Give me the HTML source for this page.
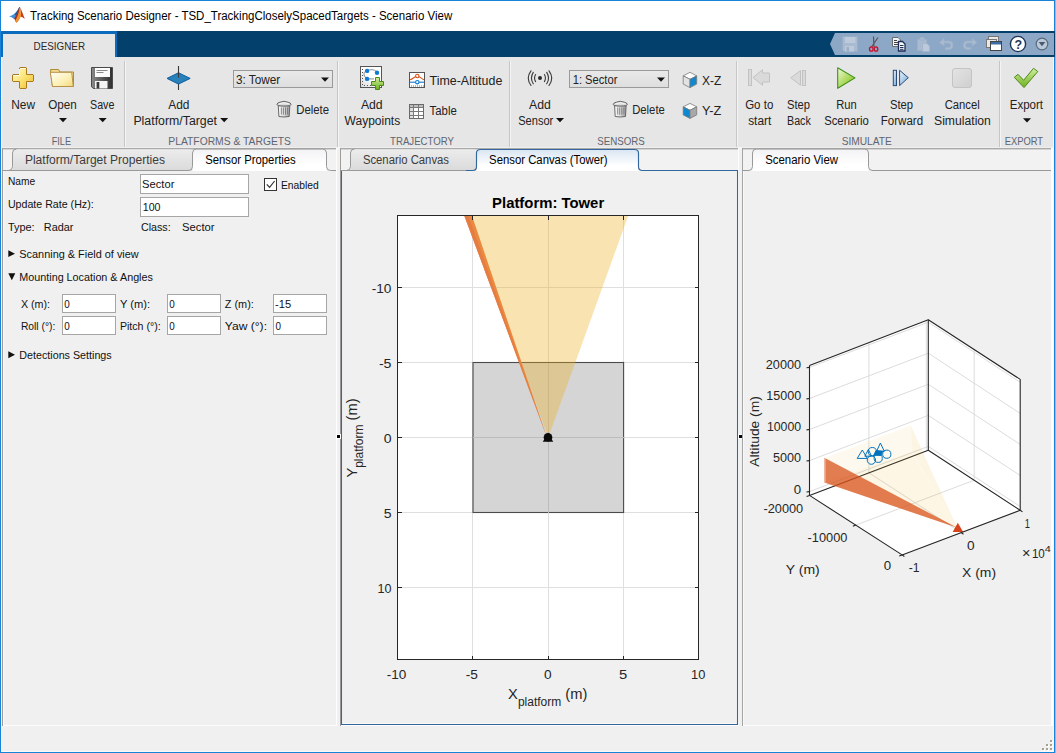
<!DOCTYPE html>
<html>
<head>
<meta charset="utf-8">
<title>Tracking Scenario Designer - TSD_TrackingCloselySpacedTargets - Scenario View</title>
<style>
html,body{margin:0;padding:0;}
body{width:1056px;height:753px;position:relative;overflow:hidden;background:#f0f0f0;font-family:"Liberation Sans",sans-serif;font-size:12px;color:#222;}
.abs{position:absolute;}
#ui{position:absolute;left:0;top:0;width:1056px;height:753px;font-family:"Liberation Sans",sans-serif;}
#ui text{white-space:pre;}
</style>
</head>
<body>
<div class="abs" id="titlebar" style="left:0;top:0;width:1056px;height:31px;background:#fff;"></div>
<div class="abs" id="tabstrip" style="left:0;top:31px;width:1056px;height:26px;background:#04406c;"></div>
<div class="abs" id="toolstrip" style="left:0;top:57px;width:1056px;height:91px;background:#e6e6e6;"></div>
<div class="abs" id="docarea" style="left:0;top:148px;width:1056px;height:605px;background:#f0f0f0;"></div>
<svg id="ui" width="1056" height="753" viewBox="0 0 1056 753">
<defs>
<linearGradient id="gInact" x1="0" y1="0" x2="0" y2="1"><stop offset="0" stop-color="#ececec"/><stop offset="1" stop-color="#dadada"/></linearGradient>
<linearGradient id="gAct" x1="0" y1="0" x2="0" y2="1"><stop offset="0" stop-color="#f3f3f6"/><stop offset="0.7" stop-color="#ffffff"/><stop offset="1" stop-color="#ffffff"/></linearGradient>
<linearGradient id="gActBlue" x1="0" y1="0" x2="0" y2="1"><stop offset="0" stop-color="#d9e5f2"/><stop offset="0.75" stop-color="#ffffff"/><stop offset="1" stop-color="#ffffff"/></linearGradient>
<linearGradient id="gCombo" x1="0" y1="0" x2="0" y2="1"><stop offset="0" stop-color="#e9e9e9"/><stop offset="1" stop-color="#dedede"/></linearGradient>
</defs>
<g id="chrome" shape-rendering="crispEdges">
<!-- DESIGNER tab -->
<rect x="1" y="31" width="116" height="26" fill="#0b6cbd"/>
<rect x="3" y="34" width="112" height="23" fill="#e6e6e6"/>
<!-- quick access toolbar -->
<path d="M830 44 L835 33 H1054 V55 H835 Z" fill="#8da8c6" shape-rendering="auto"/>
<!-- toolstrip bottom edge -->
<rect x="1" y="147" width="1054" height="1" fill="#efefef"/>
<!-- section separators -->
<g fill="#c6c6c6">
<rect x="124" y="61" width="1" height="86"/><rect x="337" y="61" width="1" height="86"/><rect x="509" y="61" width="1" height="86"/><rect x="736" y="61" width="1" height="86"/><rect x="999" y="61" width="1" height="86"/>
</g>
<g fill="#f4f4f4">
<rect x="125" y="61" width="1" height="86"/><rect x="338" y="61" width="1" height="86"/><rect x="510" y="61" width="1" height="86"/><rect x="737" y="61" width="1" height="86"/><rect x="1000" y="61" width="1" height="86"/>
</g>
<!-- combo boxes -->
<rect x="233.5" y="70.5" width="99" height="17" fill="url(#gCombo)" stroke="#9a9a9a"/>
<rect x="569.5" y="70.5" width="99" height="17" fill="url(#gCombo)" stroke="#9a9a9a"/>
</g>
<g id="arrows" fill="#111">
<path d="M59 118 h8 l-4 4.3z"/><path d="M98.7 118 h8 l-4 4.3z"/>
<path d="M220.2 118 h8 l-4 4.3z"/><path d="M556 118 h8 l-4 4.3z"/>
<path d="M1023 118.3 h8 l-4 4.3z"/>
<path d="M321 77.5 h8 l-4 4.3z"/><path d="M657 77.5 h8 l-4 4.3z"/>
</g>
<g id="panels">
<rect x="336" y="148" width="1" height="578" fill="#fdfdfd"/>
<rect x="738" y="148" width="1" height="578" fill="#fdfdfd"/>
<rect x="337" y="147" width="3" height="3" fill="#f4f4f4"/>
<rect x="739" y="147" width="3" height="3" fill="#f4f4f4"/>
<rect x="1" y="147" width="1" height="578" fill="#f6f6f6"/>

<rect x="3" y="150" width="333" height="20" fill="#f2f2f2"/>
<rect x="341" y="150" width="397" height="20" fill="#f2f2f2"/>
<rect x="743" y="150" width="310" height="20" fill="#f2f2f2"/>
<rect x="2" y="148" width="334" height="1" fill="#a9a9a9" shape-rendering="crispEdges"/>
<rect x="2" y="149" width="334" height="1" fill="#d4d4d4" shape-rendering="crispEdges"/>
<rect x="340" y="148" width="398" height="1" fill="#a9a9a9" shape-rendering="crispEdges"/>
<rect x="340" y="149" width="398" height="1" fill="#d4d4d4" shape-rendering="crispEdges"/>
<rect x="742" y="148" width="309" height="1" fill="#a9a9a9" shape-rendering="crispEdges"/>
<rect x="742" y="149" width="309" height="1" fill="#d4d4d4" shape-rendering="crispEdges"/>
<rect x="2" y="148" width="1" height="578" fill="#9c9c9c" shape-rendering="crispEdges"/>
<rect x="3" y="725" width="334" height="1" fill="#fdfdfd"/>
<rect x="3" y="171" width="1" height="554" fill="#f8f8f8"/>
<path d="M12.5 171 V153 Q12.5 149.5 16.0 149.5 H189.0 Q192.5 149.5 192.5 153 V171 Z" fill="url(#gInact)"/>
<path d="M2.5 170.5 H8.500 Q12.500 170.500 12.500 166.500 V153 Q12.500 149 16.500 149" fill="none" stroke="#999"/>
<path d="M2.5 170.500 H189" fill="none" stroke="#999"/>
<path d="M192.5 171 V153 Q192.5 149.5 196.0 149.5 H323.0 Q326.5 149.5 326.5 153 V171 Z" fill="url(#gAct)"/>
<path d="M188.5 170.5 Q192.5 170.5 192.5 166.5 V153 Q192.5 149 196.5 149 H322.5 Q326.5 149 326.5 153 V166.5 Q326.5 170.5 330.5 170.5 H336" fill="none" stroke="#999"/>
<rect x="340" y="148" width="1" height="578" fill="#a29c98" shape-rendering="crispEdges"/>
<rect x="341" y="725" width="397" height="1" fill="#fdfdfd"/>
<path d="M342.500 171 V723.500 H736.500 V171" fill="none" stroke="#fbf8f5"/>
<path d="M350.5 171 V153 Q350.5 149.5 354.0 149.5 H473.0 Q476.5 149.5 476.5 153 V171 Z" fill="url(#gInact)"/>
<path d="M340.500 170.500 H346.500 Q350.500 170.500 350.500 166.500 V153 Q350.500 149 354.500 149" fill="none" stroke="#999"/>
<path d="M340.500 170.500 H468" fill="none" stroke="#999"/>
<path d="M476.5 171 V153 Q476.5 149.5 480.0 149.5 H635.0 Q638.5 149.5 638.5 153 V171 Z" fill="url(#gActBlue)"/>
<path d="M466 170.500 H472.500 Q476.500 170.500 476.500 166.500 V153 Q476.500 149.500 480.500 149.500 H634.500 Q638.500 149.500 638.500 153 V166.500 Q638.500 170.500 642.500 170.500 H737.500 V724.500 H341.500 V171" fill="none" stroke="#33689f" stroke-width="1.150"/>
<rect x="742" y="148" width="1" height="578" fill="#a4a4a4" shape-rendering="crispEdges"/>
<rect x="743" y="171" width="1" height="554" fill="#f9f9f9"/>
<path d="M742.500 170.500 H749 M872 170.500 H1051" fill="none" stroke="#999"/>
<path d="M752.5 171 V153 Q752.5 149.5 756.0 149.5 H865.0 Q868.5 149.5 868.5 153 V171 Z" fill="url(#gAct)"/>
<path d="M748.5 170.5 Q752.5 170.5 752.5 166.5 V153 Q752.5 149 756.5 149 H864.5 Q868.5 149 868.5 153 V166.5 Q868.5 170.5 872.5 170.5 H1051" fill="none" stroke="#999"/>
<rect x="1051" y="148" width="2" height="578" fill="#fdfdfd"/>
<rect x="743" y="725" width="310" height="1" fill="#fdfdfd"/>
<rect x="336" y="434" width="5" height="5" fill="#fff" shape-rendering="crispEdges"/>
<rect x="738" y="434" width="4" height="5" fill="#fff" shape-rendering="crispEdges"/>
<rect x="337" y="435" width="3" height="3" fill="#000" shape-rendering="crispEdges"/>
<rect x="739" y="435" width="3" height="3" fill="#000" shape-rendering="crispEdges"/>
</g>
<g id="winborder" shape-rendering="crispEdges">
<rect x="1" y="57" width="1" height="695" fill="#f7f7f7"/>
<rect x="1053" y="57" width="1" height="695" fill="#f9f6f4"/>
<rect x="1" y="751" width="1053" height="1" fill="#f9f9f9"/>
<g fill="#1883d7"><rect x="0" y="0" width="1055" height="1"/><rect x="0" y="752" width="1055" height="1"/><rect x="0" y="0" width="1" height="753"/><rect x="1054" y="0" width="1" height="753"/></g>
<rect x="1054" y="31" width="1" height="26" fill="#04406c"/>
<rect x="1055" y="0" width="1" height="753" fill="#b8b0aa"/>
<g fill="#fff"><rect x="1051" y="741" width="2" height="2"/><rect x="1047" y="745" width="2" height="2"/><rect x="1051" y="745" width="2" height="2"/><rect x="1043" y="749" width="2" height="2"/><rect x="1047" y="749" width="2" height="2"/><rect x="1051" y="749" width="2" height="2"/></g>
<g fill="#a8a28e"><rect x="1050" y="740" width="2" height="2"/><rect x="1046" y="744" width="2" height="2"/><rect x="1050" y="744" width="2" height="2"/><rect x="1042" y="748" width="2" height="2"/><rect x="1046" y="748" width="2" height="2"/><rect x="1050" y="748" width="2" height="2"/></g>
</g>
<g id="toolstrip-text">
<text x="11.2" y="109.0" font-size="12" fill="#222" textLength="23.8" lengthAdjust="spacingAndGlyphs">New</text>
<text x="48.2" y="109.0" font-size="12" fill="#222" textLength="28.5" lengthAdjust="spacingAndGlyphs">Open</text>
<text x="90.0" y="109.0" font-size="12" fill="#222" textLength="24.4" lengthAdjust="spacingAndGlyphs">Save</text>
<text x="168.3" y="109.0" font-size="12" fill="#222" textLength="21.2" lengthAdjust="spacingAndGlyphs">Add</text>
<text x="133.4" y="124.9" font-size="12" fill="#222" textLength="83.6" lengthAdjust="spacingAndGlyphs">Platform/Target</text>
<text x="235.9" y="84.0" font-size="12" fill="#222" textLength="44.3" lengthAdjust="spacingAndGlyphs">3: Tower</text>
<text x="296.2" y="114.0" font-size="12" fill="#222" textLength="32.8" lengthAdjust="spacingAndGlyphs">Delete</text>
<text x="360.9" y="109.0" font-size="12" fill="#222" textLength="21.8" lengthAdjust="spacingAndGlyphs">Add</text>
<text x="344.6" y="124.9" font-size="12" fill="#222" textLength="55.6" lengthAdjust="spacingAndGlyphs">Waypoints</text>
<text x="429.6" y="85.0" font-size="12" fill="#222" textLength="72.7" lengthAdjust="spacingAndGlyphs">Time-Altitude</text>
<text x="429.6" y="115.3" font-size="12" fill="#222" textLength="27.2" lengthAdjust="spacingAndGlyphs">Table</text>
<text x="529.0" y="109.0" font-size="12" fill="#222" textLength="21.8" lengthAdjust="spacingAndGlyphs">Add</text>
<text x="518.2" y="124.9" font-size="12" fill="#222" textLength="35.1" lengthAdjust="spacingAndGlyphs">Sensor</text>
<text x="572.7" y="84.0" font-size="12" fill="#222" textLength="44.7" lengthAdjust="spacingAndGlyphs">1: Sector</text>
<text x="632.2" y="114.0" font-size="12" fill="#222" textLength="32.6" lengthAdjust="spacingAndGlyphs">Delete</text>
<text x="702.0" y="85.0" font-size="12" fill="#222" textLength="19.3" lengthAdjust="spacingAndGlyphs">X-Z</text>
<text x="702.0" y="115.3" font-size="12" fill="#222" textLength="19.3" lengthAdjust="spacingAndGlyphs">Y-Z</text>
<text x="745.2" y="109.0" font-size="12" fill="#222" textLength="28.1" lengthAdjust="spacingAndGlyphs">Go to</text>
<text x="748.2" y="124.9" font-size="12" fill="#222" textLength="23.0" lengthAdjust="spacingAndGlyphs">start</text>
<text x="787.0" y="109.0" font-size="12" fill="#222" textLength="23.1" lengthAdjust="spacingAndGlyphs">Step</text>
<text x="787.0" y="124.9" font-size="12" fill="#222" textLength="23.8" lengthAdjust="spacingAndGlyphs">Back</text>
<text x="836.2" y="109.0" font-size="12" fill="#222" textLength="20.5" lengthAdjust="spacingAndGlyphs">Run</text>
<text x="824.2" y="124.9" font-size="12" fill="#222" textLength="44.6" lengthAdjust="spacingAndGlyphs">Scenario</text>
<text x="890.0" y="109.0" font-size="12" fill="#222" textLength="23.1" lengthAdjust="spacingAndGlyphs">Step</text>
<text x="880.8" y="124.9" font-size="12" fill="#222" textLength="42.3" lengthAdjust="spacingAndGlyphs">Forward</text>
<text x="944.7" y="109.0" font-size="12" fill="#222" textLength="35.1" lengthAdjust="spacingAndGlyphs">Cancel</text>
<text x="934.0" y="124.9" font-size="12" fill="#222" textLength="56.9" lengthAdjust="spacingAndGlyphs">Simulation</text>
<text x="1009.7" y="108.7" font-size="12" fill="#222" textLength="33.4" lengthAdjust="spacingAndGlyphs">Export</text>
</g>
<g id="section-labels">
<text x="51.7" y="144.7" font-size="11.2" fill="#5e6470" textLength="19.4" lengthAdjust="spacingAndGlyphs">FILE</text>
<text x="168.3" y="144.7" font-size="11.2" fill="#5e6470" textLength="122.7" lengthAdjust="spacingAndGlyphs">PLATFORMS &amp; TARGETS</text>
<text x="390.1" y="144.7" font-size="11.2" fill="#5e6470" textLength="63.9" lengthAdjust="spacingAndGlyphs">TRAJECTORY</text>
<text x="597.2" y="144.7" font-size="11.2" fill="#5e6470" textLength="47.6" lengthAdjust="spacingAndGlyphs">SENSORS</text>
<text x="841.7" y="144.7" font-size="11.2" fill="#5e6470" textLength="50.1" lengthAdjust="spacingAndGlyphs">SIMULATE</text>
<text x="1004.7" y="144.7" font-size="11.2" fill="#5e6470" textLength="38.4" lengthAdjust="spacingAndGlyphs">EXPORT</text>
</g>
<g id="doc-tab-text">
<text x="24.9" y="164.0" font-size="12.5" fill="#3c3c3c" textLength="140.1" lengthAdjust="spacingAndGlyphs">Platform/Target Properties</text>
<text x="205.2" y="164.0" font-size="12.5" fill="#000" textLength="90.6" lengthAdjust="spacingAndGlyphs">Sensor Properties</text>
<text x="362.9" y="164.0" font-size="12.5" fill="#3c3c3c" textLength="86.1" lengthAdjust="spacingAndGlyphs">Scenario Canvas</text>
<text x="489.1" y="164.0" font-size="12.5" fill="#000" textLength="118.4" lengthAdjust="spacingAndGlyphs">Sensor Canvas (Tower)</text>
<text x="765.2" y="164.0" font-size="12.5" fill="#000" textLength="72.8" lengthAdjust="spacingAndGlyphs">Scenario View</text>
</g>
<text x="30.1" y="20.0" font-size="12" fill="#000" textLength="422.1" lengthAdjust="spacingAndGlyphs">Tracking Scenario Designer - TSD_TrackingCloselySpacedTargets - Scenario View</text>
<text x="33.5" y="49.9" font-size="11.2" fill="#2a2a2a" textLength="51.6" lengthAdjust="spacingAndGlyphs">DESIGNER</text>
<defs>
<linearGradient id="gGold" x1="0" y1="0" x2="1" y2="1"><stop offset="0" stop-color="#fffbd6"/><stop offset="0.5" stop-color="#fbe476"/><stop offset="1" stop-color="#f0b92c"/></linearGradient>
<linearGradient id="gFolder" x1="0" y1="0" x2="1" y2="1"><stop offset="0" stop-color="#fffef4"/><stop offset="0.6" stop-color="#fbf0b4"/><stop offset="1" stop-color="#f1d776"/></linearGradient>
<linearGradient id="gDisk" x1="0" y1="0" x2="1" y2="0"><stop offset="0" stop-color="#8a8a8a"/><stop offset="0.5" stop-color="#5a5a5a"/><stop offset="1" stop-color="#2e2e2e"/></linearGradient>
<linearGradient id="gGreen" x1="0" y1="0" x2="0" y2="1"><stop offset="0" stop-color="#d3ee9f"/><stop offset="1" stop-color="#6cb11f"/></linearGradient>
<linearGradient id="gRun" x1="0" y1="0" x2="1" y2="1"><stop offset="0" stop-color="#f0f9d8"/><stop offset="0.6" stop-color="#a5d64f"/><stop offset="1" stop-color="#6fb01e"/></linearGradient>
<linearGradient id="gStepF" x1="0" y1="0" x2="1" y2="1"><stop offset="0" stop-color="#eef5fc"/><stop offset="1" stop-color="#6fa6dc"/></linearGradient>
<linearGradient id="gGray" x1="0" y1="0" x2="1" y2="1"><stop offset="0" stop-color="#e4e4e4"/><stop offset="1" stop-color="#cfcfcf"/></linearGradient>
<linearGradient id="gTrash" x1="0" y1="0" x2="1" y2="0"><stop offset="0" stop-color="#fdfdfd"/><stop offset="0.5" stop-color="#d9d9d9"/><stop offset="1" stop-color="#9c9c9c"/></linearGradient>
<linearGradient id="gAxes" x1="0" y1="1" x2="1" y2="0"><stop offset="0" stop-color="#d8d8d8"/><stop offset="0.5" stop-color="#ffffff"/><stop offset="1" stop-color="#ffffff"/></linearGradient>
</defs>
<g id="icons">
<!-- New (gold plus) -->
<path d="M20 67.500 h6 l0.500 0.500 v6.500 h6.500 l0.500 0.500 v6 l-0.500 0.500 h-6.500 v6.500 l-0.500 0.500 h-6 l-0.500 -0.500 v-6.500 h-6.500 l-0.500 -0.500 v-6 l0.500 -0.500 h6.500 v-6.500 z" fill="url(#gGold)" stroke="#a87a1c" stroke-width="1"/>
<path d="M20.500 68.500 h5 M13.500 75.500 h6 v-6.500" fill="none" stroke="#fffef0" stroke-width="1" stroke-opacity="0.9"/>
<!-- Open (folder) -->
<path d="M50.500 69.500 h8 l1.500 2.500 h13.500 v14.500 h-21 z" fill="#f3dc8d" stroke="#b08a3c" stroke-width="1"/>
<path d="M50.300 72.300 h21.400 l1.600 14.200 h-20.800 z" fill="url(#gFolder)" stroke="#b8924a" stroke-width="1"/>
<!-- Save (floppy) -->
<path d="M91.500 67.500 h21 v21 h-19.200 l-1.800 -1.800 z" fill="url(#gDisk)" stroke="#4a4a4a" stroke-width="1"/>
<rect x="95" y="68" width="15" height="9" fill="#fdfdfd"/>
<path d="M96.500 70.500 h11 M96.500 72.500 h7" stroke="#8a8a8a" stroke-width="1"/>
<rect x="95" y="81" width="12.500" height="7.500" fill="#f4f4f4"/>
<rect x="96.600" y="82" width="2.700" height="6.500" fill="#3a3a3a"/>
<!-- Add Platform/Target (diamond) -->
<path d="M178.500 66 V90" stroke="#3a3a3a" stroke-width="1.100"/>
<path d="M167 78.400 L178.500 72.800 L190.200 78.400 L178.500 84.100 Z" fill="#2a80b9" stroke="#0c5c9e" stroke-width="1"/>
<path d="M178.500 72 V77.700" stroke="#3a3a3a" stroke-width="1.100"/>
<!-- trash icons -->
<g transform="translate(276 96.5)">
<path d="M2.300 9.200 L2.900 20 Q8 21 13.200 20 L13.800 9.200 Z" fill="url(#gTrash)" stroke="#5a5a5a" stroke-width="0.900"/>
<path d="M1 8 Q1 6.300 4 5.700 Q8 3.900 12 5.700 Q15 6.300 15 8 Q15 9.500 8 9.500 Q1 9.500 1 8 Z" fill="#dcdcdc" stroke="#555" stroke-width="0.900"/>
<path d="M3 7.300 Q8 5.300 13 7.300" fill="none" stroke="#f6f6f6" stroke-width="0.900"/>
<path d="M5.400 11 V18 M7.400 11 V18.200 M9.500 11 V18.200 M11.600 11 V18" stroke="#6a6a6a" stroke-width="0.750" fill="none"/>
</g>
<g transform="translate(612.3 96.5)">
<path d="M2.300 9.200 L2.900 20 Q8 21 13.200 20 L13.800 9.200 Z" fill="url(#gTrash)" stroke="#5a5a5a" stroke-width="0.900"/>
<path d="M1 8 Q1 6.300 4 5.700 Q8 3.900 12 5.700 Q15 6.300 15 8 Q15 9.500 8 9.500 Q1 9.500 1 8 Z" fill="#dcdcdc" stroke="#555" stroke-width="0.900"/>
<path d="M3 7.300 Q8 5.300 13 7.300" fill="none" stroke="#f6f6f6" stroke-width="0.900"/>
<path d="M5.400 11 V18 M7.400 11 V18.200 M9.500 11 V18.200 M11.600 11 V18" stroke="#6a6a6a" stroke-width="0.750" fill="none"/>
</g>
<!-- Add waypoints -->
<rect x="360.500" y="66.500" width="21" height="21" fill="url(#gAxes)" stroke="#555"/>
<path d="M362 69.500 h1 M362 72.500 h1 M362 75.500 h1 M362 78.500 h1 M362 81.500 h1 M362 84.500 h1 M364.500 86 v-1 M367.500 86 v-1 M370.500 86 v-1 M373.500 86 v-1 M376.500 86 v-1 M379.500 86 v-1" stroke="#555" stroke-width="1"/>
<path d="M367.100 78.900 C362.500 76 363.500 70.500 367.100 70.900 C371 68.500 376 70 377 72.700 M367.100 78.900 H374" fill="none" stroke="#8a8a8a" stroke-width="1"/>
<circle cx="367.100" cy="70.900" r="2.200" fill="#0f7ad5"/><circle cx="377" cy="72.700" r="2.200" fill="#0f7ad5"/><circle cx="367.100" cy="78.900" r="2.200" fill="#0f7ad5"/>
<path d="M375.500 77.500 h4 v4 h4 v4 h-4 v4 h-4 v-4 h-4 v-4 h4 z" fill="url(#gGreen)" stroke="#4e8a17" stroke-width="1"/>
<!-- Time-Altitude -->
<rect x="409.500" y="72.500" width="15" height="15" fill="#fff" stroke="#555"/>
<path d="M411 86 h1 M413 86 h1 M415 86 h1 M417 86 h1 M419 86 h1 M421 86 h1 M423 86 h1" stroke="#777" stroke-width="1"/>
<path d="M410 79.800 C413 79 415 76 417.300 76 C419.600 76 421.500 79 424 79.800" fill="none" stroke="#d9531a" stroke-width="1.100"/>
<path d="M410 82.200 H424" stroke="#0f7ad5" stroke-width="1.100"/>
<circle cx="417.300" cy="76" r="1.700" fill="#fff" stroke="#d9531a" stroke-width="1.100"/>
<circle cx="417.300" cy="82.200" r="1.700" fill="#fff" stroke="#0f7ad5" stroke-width="1.100"/>
<!-- Table -->
<g shape-rendering="crispEdges">
<rect x="409.500" y="104.500" width="14" height="14" fill="#fff" stroke="#6a6a6a"/>
<rect x="410" y="105" width="13" height="2" fill="#bdbdbd"/>
<rect x="410" y="108" width="3" height="10" fill="#dedede"/>
<path d="M410 107.500 h13 M410 111.500 h13 M410 115.500 h13 M413.500 105 v13 M418.500 105 v13" stroke="#7a7a7a" stroke-width="1"/>
</g>
<!-- Add sensor -->
<circle cx="540" cy="78" r="2" fill="#2a2a2a"/>
<g fill="none" stroke="#3a3a3a" stroke-width="1.100" stroke-linecap="round">
<path d="M535.600 74.500 Q533.500 78 535.600 81.600"/><path d="M533.300 72.400 Q529.600 78 533.300 83.800"/><path d="M531 70.800 Q525.500 78 531 85.500"/>
<path d="M544.400 74.500 Q546.500 78 544.400 81.600"/><path d="M546.700 72.400 Q550.400 78 546.700 83.800"/><path d="M549 70.800 Q554.500 78 549 85.500"/>
</g>
<!-- cubes -->
<g stroke="#7a7a7a" stroke-width="0.800" stroke-linejoin="round">
<path d="M690 72.300 L696.700 75.900 L690 79.300 L683.200 75.900 Z" fill="#fdfdfd"/>
<path d="M683.200 75.900 L690 79.300 V87.600 L683.200 84.100 Z" fill="#e2e2e2"/>
<path d="M696.700 75.900 L690 79.300 V87.600 L696.700 84.100 Z" fill="#0f88d0"/>
<path d="M690 103.400 L696.700 106.800 L690 110.300 L683.200 106.800 Z" fill="#fdfdfd"/>
<path d="M683.200 106.800 L690 110.300 V118.400 L683.200 114.900 Z" fill="#0f88d0"/>
<path d="M696.700 106.800 L690 110.300 V118.400 L696.700 114.900 Z" fill="#a8a8a8"/>
</g>
<!-- Go to start (disabled) -->
<g fill="#dadada" stroke="#c2c2c2" stroke-width="1">
<rect x="748.500" y="69.500" width="3" height="16"/>
<path d="M753 77.500 L762.500 69.800 V73 H769.500 V82 H762.500 V85.300 Z"/>
<path d="M790.800 77.700 L800.500 70.500 V85.300 Z"/>
<rect x="802.500" y="70.500" width="3" height="15"/>
</g>
<!-- Run -->
<path d="M837.700 67.800 L855 77.900 L837.700 88.300 Z" fill="url(#gRun)" stroke="#3e8e1e" stroke-width="1.100" stroke-linejoin="round"/>
<!-- Step forward -->
<rect x="893.300" y="70.300" width="3.200" height="15.300" fill="url(#gStepF)" stroke="#2a4a7a" stroke-width="1"/>
<path d="M899.600 70.300 L908.300 77.700 L899.600 85.600 Z" fill="url(#gStepF)" stroke="#2a4a7a" stroke-width="1" stroke-linejoin="round"/>
<!-- Cancel -->
<rect x="952.500" y="68.500" width="19" height="19" rx="2.500" fill="url(#gGray)" stroke="#c4c4c4"/>
<!-- Export check -->
<path d="M1014.300 77.300 L1018 74.300 L1023.600 80.300 L1033.500 68.300 L1037.800 71.500 L1024 87.600 Z" fill="url(#gGreen)" stroke="#4e8a17" stroke-width="1" stroke-linejoin="round"/>
<!-- Matlab logo -->
<path d="M9 16.300 C12.500 15.600 16.500 13.500 19.300 7 L19 13 L15.300 18.800 L14 19 C12.500 17.600 10.800 17 9 16.300 Z" fill="#3b8ed8"/>
<path d="M14.500 14.300 C16.500 12.500 18 10 19.300 7 L18.800 12.500 L16 15.500 Z" fill="#1f5a9e"/>
<path d="M19.300 6.900 C18 11.500 16.500 15.500 14.200 18.600 L16.300 22.800 C18.500 21 19.500 18.500 20.500 16.500 L20 6.900 Z" fill="#a92a1a"/>
<path d="M19.700 6.800 C20.800 9.500 21.200 14 20.800 16.600 C19.500 19 18.200 21.200 16.300 22.800 L15.300 20.600 C17.600 17 19.200 12 19.700 6.800 Z" fill="#f0922b"/>
<path d="M19.800 6.800 C21.600 10 23.200 15 24.800 18.700 C23.600 17.900 22.200 17 20.900 16.700 C21.300 13 20.900 9.500 19.800 6.800 Z" fill="#c43d20"/>
</g>
<g id="qat">
<!-- save (disabled) -->
<path d="M842.500 36.500 h15 v15 h-13.500 l-1.500 -1.500 z" fill="#a9bbd0" stroke="#9aaec6"/>
<rect x="845" y="37" width="10.500" height="6" fill="#bccadb"/>
<rect x="845" y="46" width="9" height="5.500" fill="#bccadb"/>
<rect x="846.500" y="47" width="2.500" height="4.500" fill="#9aaec6"/>
<!-- scissors -->
<path d="M873.500 36.500 L874 47 M878 37.500 L871.500 47" stroke="#555" stroke-width="1.200" fill="none"/>
<ellipse cx="871.300" cy="49" rx="1.800" ry="2.200" fill="none" stroke="#c8102e" stroke-width="1.300"/>
<ellipse cx="876" cy="49" rx="1.800" ry="2.200" fill="none" stroke="#c8102e" stroke-width="1.300"/>
<!-- copy -->
<path d="M892.500 37.500 h5.500 l2.500 2.500 v6.500 h-8 z" fill="#f4f4f4" stroke="#555" stroke-width="0.800"/>
<path d="M894 40.500 h3 M894 42.500 h5 M894 44.500 h5" stroke="#444" stroke-width="1"/>
<path d="M898.500 41.500 h4 l2.500 2.500 v7 h-6.500 z" fill="#f8f8f8" stroke="#1d2f55" stroke-width="1.300"/>
<path d="M900 45.500 h3.500 M900 47.500 h3.500 M900 49.300 h3.500" stroke="#1d2f55" stroke-width="1"/>
<!-- paste (disabled) -->
<path d="M917.500 39.500 h9 v11 h-9 z" fill="#a9bbd0" stroke="#9fb2c9"/>
<rect x="920" y="37.500" width="4" height="2.500" fill="#a9bbd0" stroke="#9fb2c9"/>
<path d="M922.500 43.500 h4.500 l2.500 2.500 v5.500 h-7 z" fill="#bccadb" stroke="#a3b6cc"/>
<!-- undo / redo (disabled) -->
<path d="M939.500 42.500 l4.500 -4 v2.500 h5 q4 0 4 4 q0 4.500 -4.500 4.500 h-3 v-2 h3 q2.300 0 2.300 -2.500 q0 -2 -2.300 -2 h-4.500 v3 z" fill="#a9bbd0" stroke="#9db0c8" stroke-width="0.800"/>
<path d="M976.800 42.500 l-4.500 -4 v2.500 h-5 q-4 0 -4 4 q0 4.500 4.500 4.500 h3 v-2 h-3 q-2.300 0 -2.300 -2.500 q0 -2 2.300 -2 h4.500 v3 z" fill="#a9bbd0" stroke="#9db0c8" stroke-width="0.800"/>
<!-- windows -->
<rect x="988.500" y="36.500" width="10" height="8" fill="#e8e8e8" stroke="#777"/>
<rect x="986.500" y="39.500" width="10" height="8" fill="#e8e8e8" stroke="#777"/>
<rect x="990.500" y="41.500" width="11" height="9" fill="#fff" stroke="#444"/>
<rect x="991" y="42" width="10" height="2.500" fill="#3a6ea5"/>
<!-- help -->
<circle cx="1018" cy="44" r="7.600" fill="#fff" stroke="#1d3557" stroke-width="1.400"/>
<text x="1014.600" y="48.600" font-size="12.500" font-weight="bold" fill="#1d3557">?</text>
<!-- dropdown -->
<circle cx="1042" cy="44" r="5.800" fill="#b9c9db" stroke="#5a6a7c" stroke-width="1.200"/>
<path d="M1038.700 42 h6.600 l-3.300 4.200 z" fill="#4a5868"/>
</g>
<g id="props">
<g shape-rendering="crispEdges" fill="#fff" stroke="#a6a6a6">
<rect x="140.5" y="174.5" width="108" height="19"/>
<rect x="140.5" y="197.5" width="108" height="19"/>
<rect x="62.5" y="294.5" width="53" height="18"/>
<rect x="167.5" y="294.5" width="53" height="18"/>
<rect x="273.5" y="294.5" width="53" height="18"/>
<rect x="62.5" y="316.5" width="53" height="18"/>
<rect x="167.5" y="316.5" width="53" height="18"/>
<rect x="273.5" y="316.5" width="53" height="18"/>
</g>
<rect x="264.5" y="178.5" width="12" height="12" fill="#fff" stroke="#333" shape-rendering="crispEdges"/>
<path d="M266.8 184.3 L269.6 187.4 L274.6 181" fill="none" stroke="#333" stroke-width="1.2"/>
<path d="M8.3 250.3 L15 253.7 L8.3 257 Z" fill="#111"/>
<path d="M8.3 273.3 H15.3 L11.8 280.3 Z" fill="#111"/>
<path d="M8.3 351.3 L15 354.8 L8.3 358.3 Z" fill="#111"/>
<text x="7.9" y="184.7" font-size="11" fill="#111" textLength="27.2" lengthAdjust="spacingAndGlyphs">Name</text>
<text x="142.1" y="187.5" font-size="11" fill="#111" textLength="32.3" lengthAdjust="spacingAndGlyphs">Sector</text>
<text x="280.9" y="188.7" font-size="11" fill="#111" textLength="37.8" lengthAdjust="spacingAndGlyphs">Enabled</text>
<text x="7.9" y="208.0" font-size="11" fill="#111" textLength="85.8" lengthAdjust="spacingAndGlyphs">Update Rate (Hz):</text>
<text x="142.8" y="211.1" font-size="11" fill="#111" textLength="17.7" lengthAdjust="spacingAndGlyphs">100</text>
<text x="7.9" y="231.1" font-size="11" fill="#111" textLength="26.7" lengthAdjust="spacingAndGlyphs">Type:</text>
<text x="43.8" y="231.1" font-size="11" fill="#111" textLength="29.6" lengthAdjust="spacingAndGlyphs">Radar</text>
<text x="140.9" y="231.1" font-size="11" fill="#111" textLength="29.8" lengthAdjust="spacingAndGlyphs">Class:</text>
<text x="182.1" y="231.1" font-size="11" fill="#111" textLength="32.5" lengthAdjust="spacingAndGlyphs">Sector</text>
<text x="19.3" y="258.0" font-size="11" fill="#111" textLength="119.4" lengthAdjust="spacingAndGlyphs">Scanning &amp; Field of view</text>
<text x="19.3" y="281.0" font-size="11" fill="#111" textLength="133.6" lengthAdjust="spacingAndGlyphs">Mounting Location &amp; Angles</text>
<text x="20.9" y="308.0" font-size="11" fill="#111" textLength="29.2" lengthAdjust="spacingAndGlyphs">X (m):</text>
<text x="119.9" y="308.0" font-size="11" fill="#111" textLength="30.2" lengthAdjust="spacingAndGlyphs">Y (m):</text>
<text x="224.8" y="308.0" font-size="11" fill="#111" textLength="29.0" lengthAdjust="spacingAndGlyphs">Z (m):</text>
<text x="20.9" y="329.7" font-size="11" fill="#111" textLength="34.5" lengthAdjust="spacingAndGlyphs">Roll (°):</text>
<text x="119.9" y="329.7" font-size="11" fill="#111" textLength="40.8" lengthAdjust="spacingAndGlyphs">Pitch (°):</text>
<text x="224.8" y="329.7" font-size="11" fill="#111" textLength="42.2" lengthAdjust="spacingAndGlyphs">Yaw (°):</text>
<text x="64.3" y="308.0" font-size="11" fill="#111" textLength="5.5" lengthAdjust="spacingAndGlyphs">0</text>
<text x="169.3" y="308.0" font-size="11" fill="#111" textLength="5.5" lengthAdjust="spacingAndGlyphs">0</text>
<text x="275.0" y="308.0" font-size="11" fill="#111" textLength="16.1" lengthAdjust="spacingAndGlyphs">-15</text>
<text x="64.3" y="329.7" font-size="11" fill="#111" textLength="5.5" lengthAdjust="spacingAndGlyphs">0</text>
<text x="169.3" y="329.7" font-size="11" fill="#111" textLength="5.5" lengthAdjust="spacingAndGlyphs">0</text>
<text x="275.5" y="329.7" font-size="11" fill="#111" textLength="5.5" lengthAdjust="spacingAndGlyphs">0</text>
<text x="19.3" y="358.7" font-size="11" fill="#111" textLength="92.4" lengthAdjust="spacingAndGlyphs">Detections Settings</text>
</g>
<g id="plot2d">
<rect x="397.5" y="215.5" width="301.0" height="444.0" fill="#fff"/>
<clipPath id="axclip"><rect x="397.5" y="215.5" width="301.0" height="444.0"/></clipPath>
<g stroke="#dfdfdf" stroke-width="1" shape-rendering="crispEdges">
<path d="M472.5 215.5 V659.5"/>
<path d="M548.5 215.5 V659.5"/>
<path d="M623.5 215.5 V659.5"/>
<path d="M397.5 287.5 H698.5"/>
<path d="M397.5 362.5 H698.5"/>
<path d="M397.5 437.5 H698.5"/>
<path d="M397.5 512.5 H698.5"/>
<path d="M397.5 587.5 H698.5"/>
</g>
<rect x="473.0" y="362.5" width="150.6" height="150.0" fill="#bebebe" fill-opacity="0.65" stroke="#4a4a4a" stroke-width="1.1"/>
<path d="M548.5 362.5 V512.5 M473.0 437.5 H623.6" stroke="#bcbcbc" stroke-width="1" shape-rendering="crispEdges"/>
<g clip-path="url(#axclip)">
<path d="M548.3 437.5 L467.7 215.5 L628.3 215.5 Z" fill="#edb120" fill-opacity="0.35"/>
<path d="M547 437.5 L464.2 215.5 L471.9 215.5 Z" fill="#ea8a3e"/>
<path d="M547 437.5 L464.2 215.5 L468.3 215.5 Z" fill="#e57c44"/>
</g>
<circle cx="548.0" cy="437.2" r="4.3" fill="#0a0a0a"/>
<path d="M548.0 432.5 L553.1999999999999 441.7 H542.8 Z" fill="#0a0a0a"/>
<rect x="397.5" y="215.5" width="301.0" height="444.0" fill="none" stroke="#262626" stroke-width="1" shape-rendering="crispEdges"/>
<g stroke="#262626" stroke-width="1" shape-rendering="crispEdges">
<path d="M472.5 659.5 v-4 M472.5 215.5 v4"/>
<path d="M548.5 659.5 v-4 M548.5 215.5 v4"/>
<path d="M623.5 659.5 v-4 M623.5 215.5 v4"/>
<path d="M397.5 287.5 h4 M698.5 287.5 h-4"/>
<path d="M397.5 362.5 h4 M698.5 362.5 h-4"/>
<path d="M397.5 437.5 h4 M698.5 437.5 h-4"/>
<path d="M397.5 512.5 h4 M698.5 512.5 h-4"/>
<path d="M397.5 587.5 h4 M698.5 587.5 h-4"/>
</g>
<text x="371.7" y="293.4" font-size="12.3" fill="#262626" textLength="19.8" lengthAdjust="spacingAndGlyphs">-10</text>
<text x="378.9" y="368.4" font-size="12.3" fill="#262626" textLength="12.6" lengthAdjust="spacingAndGlyphs">-5</text>
<text x="383.7" y="443.4" font-size="12.3" fill="#262626" textLength="7.8" lengthAdjust="spacingAndGlyphs">0</text>
<text x="383.7" y="518.4" font-size="12.3" fill="#262626" textLength="7.8" lengthAdjust="spacingAndGlyphs">5</text>
<text x="377.5" y="593.4" font-size="12.3" fill="#262626" textLength="14.0" lengthAdjust="spacingAndGlyphs">10</text>
<text x="386.8" y="678.6" font-size="12.3" fill="#262626" textLength="19.6" lengthAdjust="spacingAndGlyphs">-10</text>
<text x="465.8" y="678.6" font-size="12.3" fill="#262626" textLength="12.2" lengthAdjust="spacingAndGlyphs">-5</text>
<text x="543.9" y="678.6" font-size="12.3" fill="#262626" textLength="7.6" lengthAdjust="spacingAndGlyphs">0</text>
<text x="618.9" y="678.6" font-size="12.3" fill="#262626" textLength="8.2" lengthAdjust="spacingAndGlyphs">5</text>
<text x="691.1" y="678.6" font-size="12.3" fill="#262626" textLength="14.3" lengthAdjust="spacingAndGlyphs">10</text>
<text x="492.1" y="207.5" font-size="14.67" fill="#000" textLength="112.1" lengthAdjust="spacingAndGlyphs" font-weight="bold">Platform: Tower</text>
<text x="508.1" y="698.8" font-size="14.67" fill="#262626">X<tspan dy="7.3" font-size="12">platform</tspan><tspan dy="-7.3"> (m)</tspan></text>
<text transform="translate(357.2 477.6) rotate(-90)" font-size="14.67" fill="#262626">Y<tspan dy="5.4" font-size="12">platform</tspan><tspan dy="-5.4"> (m)</tspan></text>
</g>
<g id="plot3d">
<path d="M809.5 495.4 L809.5 365.6 L928.3 319.7 L1020.2 379.4 L1020.2 510.3 L902.1 554.9 Z" fill="#fff"/>
<g stroke="#d8d8d8" stroke-width="0.9" fill="none">
<path d="M809.5 460.6 L928.3 415.4 L1020.2 475.5"/>
<path d="M809.5 429.5 L928.3 384.3 L1020.2 444.4"/>
<path d="M809.5 398.5 L928.3 353.2 L1020.2 413.4"/>
<path d="M809.5 367.4 L928.3 322.2 L1020.2 382.3"/>
<path d="M809.5 491.6 L928.3 446.4 L1020.2 506.5"/>
<path d="M868.9 343.0 L868.9 472.8 L961.2 532.6"/>
<path d="M974.2 349.6 L974.2 480.2 L855.8 525.1"/>
<path d="M926.3 321 V449.5"/>
</g>
<g stroke="#262626" stroke-width="1.1" fill="none" stroke-linejoin="round">
<path d="M809.5 495.4 L928.3 450.2 L1020.2 510.3"/>
<path d="M928.3 450.2 L928.3 319.7"/>
</g>
<path d="M824 458.2 L910.8 425.5 L957.3 527.8 Z" fill="#edb120" fill-opacity="0.075"/>
<path d="M910.8 425.5 L912 452 L957.3 527.8 Z" fill="#edb120" fill-opacity="0.05"/>
<path d="M824 482.3 L870 498 L957.3 527.8 L910.8 452 Z" fill="#edb120" fill-opacity="0.04"/>
<path d="M824.3 457.7 L957.3 527.8 L824.3 482.6 Z" fill="#d9531a" fill-opacity="0.76"/>
<rect x="824.3" y="457.7" width="1.6" height="24.9" fill="#fff" fill-opacity="0.3"/>
<g stroke="#0072bd" stroke-width="1" fill="none" stroke-linejoin="round">
<path d="M857.2 458.4 L862.3 450 L867.3 458.4 Z"/>
<path d="M876.6 451.3 L880.4 443 L884.3 451.3 Z"/>
<path d="M864.8 456.2 L868.3 449.6 L871.6 456.2 Z"/>
<path d="M873.8 455.2 L876 450.6 L882.6 451.2 L881 455.4 Z" fill="#0072bd"/>
<circle cx="872.3" cy="451.6" r="4.1"/>
<circle cx="871.4" cy="460.1" r="4.2"/>
<circle cx="878.2" cy="458.3" r="4.1"/>
<circle cx="886.8" cy="454.2" r="4.1"/>
</g>
<path d="M957.8 522.8 L963.2 531.9 H952.6 Z" fill="#d9431a"/>
<g stroke="#262626" stroke-width="1.1" fill="none" stroke-linejoin="round">
<path d="M809.5 365.6 L809.5 495.4 L902.1 554.9 L1020.2 510.3 L1020.2 379.4 L928.3 319.7 L809.5 365.6"/>
<path d="M809.5 491.6 l-3 0.4"/>
<path d="M809.5 460.6 l-3 0.4"/>
<path d="M809.5 429.5 l-3 0.4"/>
<path d="M809.5 398.5 l-3 0.4"/>
<path d="M809.5 367.4 l-3 0.4"/>
<path d="M809.5 495.4 l-2.9 1.1"/>
<path d="M902.1 554.9 l2.3 1.6"/>
<path d="M855.8 525.1 l-2.9 1.1"/>
<path d="M961.2 532.6 l2.3 1.6"/>
<path d="M902.1 554.9 l-2.9 1.1"/>
<path d="M1020.2 510.3 l2.3 1.6"/>
</g>
<text x="765.8" y="368.7" font-size="12" fill="#262626" textLength="35.3" lengthAdjust="spacingAndGlyphs">20000</text>
<text x="766.3" y="399.8" font-size="12" fill="#262626" textLength="34.8" lengthAdjust="spacingAndGlyphs">15000</text>
<text x="766.9" y="430.6" font-size="12" fill="#262626" textLength="34.2" lengthAdjust="spacingAndGlyphs">10000</text>
<text x="773.0" y="462.2" font-size="12" fill="#262626" textLength="28.1" lengthAdjust="spacingAndGlyphs">5000</text>
<text x="793.7" y="494.0" font-size="12" fill="#262626" textLength="7.4" lengthAdjust="spacingAndGlyphs">0</text>
<text x="763.5" y="512.9" font-size="12" fill="#262626" textLength="39.7" lengthAdjust="spacingAndGlyphs">-20000</text>
<text x="807.6" y="541.8" font-size="12" fill="#262626" textLength="39.8" lengthAdjust="spacingAndGlyphs">-10000</text>
<text x="883.8" y="570.0" font-size="12" fill="#262626" textLength="7.4" lengthAdjust="spacingAndGlyphs">0</text>
<text x="908.8" y="572.0" font-size="12" fill="#262626" textLength="10.8" lengthAdjust="spacingAndGlyphs">-1</text>
<text x="966.9" y="550.4" font-size="12" fill="#262626" textLength="7.6" lengthAdjust="spacingAndGlyphs">0</text>
<text x="1024.8" y="528.1" font-size="12" fill="#262626" textLength="5.2" lengthAdjust="spacingAndGlyphs">1</text>
<text x="1022" y="557.8" font-size="14.5" fill="#262626">×</text>
<text x="1031.9" y="557.8" font-size="12" fill="#262626" textLength="12.9" lengthAdjust="spacingAndGlyphs">10</text>
<text x="1044.7" y="551.8" font-size="9.6" fill="#262626" textLength="6.0" lengthAdjust="spacingAndGlyphs">4</text>
<text x="785.8" y="574.0" font-size="13.3" fill="#262626" textLength="34.0" lengthAdjust="spacingAndGlyphs">Y (m)</text>
<text x="962.1" y="577.2" font-size="13.3" fill="#262626" textLength="34.0" lengthAdjust="spacingAndGlyphs">X (m)</text>
<text transform="translate(758.6 466.8) rotate(-90)" font-size="13.3" fill="#262626" textLength="70.6" lengthAdjust="spacingAndGlyphs">Altitude (m)</text>
</g>
</svg>
</body>
</html>
